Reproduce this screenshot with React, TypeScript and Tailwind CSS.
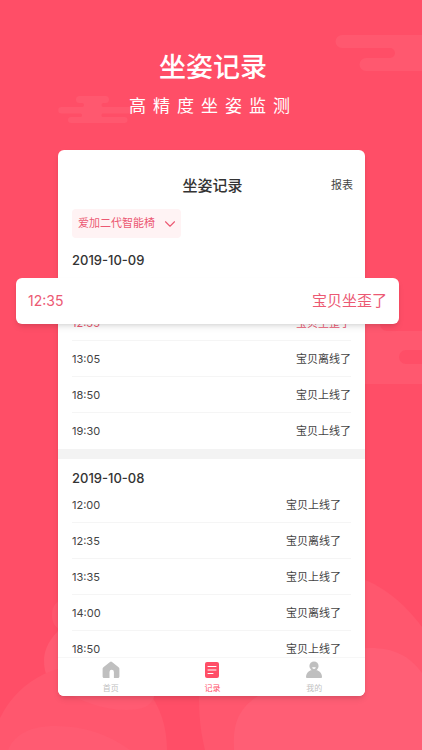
import { ChevronDown } from 'lucide-react';

const days = [
  {
    date: '2019-10-09',
    listClass: 'mt-9',
    statusClass: '',
    records: [
      { time: '12:35', status: '宝贝坐歪了', alert: true },
      { time: '13:05', status: '宝贝离线了', alert: false },
      { time: '18:50', status: '宝贝上线了', alert: false },
      { time: '19:30', status: '宝贝上线了', alert: false },
    ],
  },
  {
    date: '2019-10-08',
    listClass: '',
    statusClass: 'pr-2.5',
    records: [
      { time: '12:00', status: '宝贝上线了', alert: false },
      { time: '12:35', status: '宝贝离线了', alert: false },
      { time: '13:35', status: '宝贝上线了', alert: false },
      { time: '14:00', status: '宝贝离线了', alert: false },
      { time: '18:50', status: '宝贝上线了', alert: false },
    ],
  },
];

function HomeIcon() {
  return (
    <svg viewBox="0 0 18 18" className="size-[18px]" fill="currentColor" aria-hidden="true">
      <path d="M8 .9a1.6 1.6 0 0 1 2 0l6.600 5.300c.5.4.8 1 .8 1.600v7.700c0 .9-.6 1.500-1.500 1.500h-4v-6a2.200 2.200 0 0 0-4.400 0v6H2.100C1.200 17 .6 16.400.6 15.500V7.800c0-.6.3-1.200.8-1.600z" />
    </svg>
  );
}

function RecordIcon() {
  return (
    <svg viewBox="0 0 18 18" className="size-[18px]" aria-hidden="true">
      <rect x="2" y="1" width="14" height="16" rx="2" fill="currentColor" />
      <path d="M5 5.500h8M5 9h8M5 12.500h5" stroke="#fff" strokeWidth="1" strokeLinecap="round" />
    </svg>
  );
}

function ProfileIcon() {
  return (
    <svg viewBox="0 0 18 18" className="size-[18px]" aria-hidden="true">
      <circle cx="9" cy="5" r="4.600" fill="currentColor" />
      <path d="M1 15.800C1.300 12 4.200 8.800 9 8.800s7.700 3.200 8 7c0 .8-.4 1.200-1.200 1.200H2.200c-.8 0-1.200-.4-1.200-1.200z" fill="currentColor" />
      <path d="M7.200 6.200h3.600a1.800 1.800 0 0 1-3.600 0z" fill="#fff" />
    </svg>
  );
}

const tabs = [
  { label: '首页', icon: HomeIcon, active: false },
  { label: '记录', icon: RecordIcon, active: true },
  { label: '我的', icon: ProfileIcon, active: false },
];

function Backdrop() {
  return (
    <svg
      viewBox="0 0 422 750"
      preserveAspectRatio="xMidYMid slice"
      className="absolute inset-0 size-full"
      aria-hidden="true"
    >
      {/* clouds */}
      <g fill="#ff586f">
        <path d="M79.500 96h26a3.500 3.500 0 0 1 0 7h-2a2 2 0 0 0 0 4h26a3.200 3.200 0 0 1 0 6.500h-27a2 2 0 0 0 0 3.500h22a3 3 0 0 1 0 6H71a3 3 0 0 1 0-6h10a2 2 0 0 0 0-3.500H61.500a3.200 3.200 0 0 1 0-6.500H82a2 2 0 0 0 0-4h-2.500a3.500 3.500 0 0 1 0-7z" />
        <path d="M422 35h-80a6.500 6.500 0 0 0 0 13h48a5 5 0 0 1 0 10h-24a6.500 6.500 0 0 0 0 13h56z" />
        <path d="M360 310h20v14a7 7 0 0 0 7 7h35v19h-16a7 7 0 0 0 0 14h16v20h-62z" />
      </g>
      {/* hills */}
      <path d="M199 700C200 630 260 572 325 572c42 0 74 24 97 55v123H205c-4-16-6-32-6-50z" fill="#ff576e" />
      <path d="M234 750c-1-25 3-40 24-54 30-22 62-48 112-48 24 0 40 8 52 25v77z" fill="#ff5e75" />
      <path d="M60 600c-6 4-8 8-8 15s2 11 8 15z" fill="#ff576e" />
      <path d="M62 627c-12 11-18 22-18 33 0 14 4 22 16 30 22 13 46 20 66 20 17 0 26-4 28-14V640z" fill="#ff5b72" />
      <path d="M0 718c10-20 24-34 44-44 35-16 80-12 103 16 14 17 20 38 20 60H0z" fill="#ff576e" />
      <path d="M58 688c22 14 47 22 68 22 17 0 26-4 28-14v-10H58z" fill="#ff5b72" />
      <path d="M8 750c7-17 24-24 48-24 28 0 52 8 74 24z" fill="#ff5b72" />
    </svg>
  );
}

function DeviceSelect() {
  return (
    <div className="relative mt-2 ml-3.5 w-[109px] text-[#ec5973]">
      <select
        aria-label="设备"
        className="block h-[29px] w-full appearance-none rounded-sm bg-[#fff3f4] pl-1.5 text-[11px]"
      >
        <option>爱加二代智能椅</option>
      </select>
      <ChevronDown className="pointer-events-none absolute top-1.5 right-0.5 size-[18px]" strokeWidth={1.5} />
    </div>
  );
}

export default function App() {
  return (
    <main className="relative min-h-screen overflow-hidden bg-[#ff4e67] pb-[54px] font-['Inter','Noto_Sans_CJK_SC',sans-serif] text-[#444]">
      <Backdrop />

      <header className="relative pt-[50px] pl-1 text-center text-white">
        <h1 className="text-[27px] leading-9 font-medium">坐姿记录</h1>
        <p className="mt-2 text-[17px] leading-6 tracking-[7px]">高精度坐姿监测</p>
      </header>

      <div className="relative mt-8 mr-[57px] ml-[58px] rounded-md bg-white shadow-md">
        <div className="grid grid-cols-3 items-center px-3 pt-5 leading-[31px]">
          <h2 className="col-start-2 pl-0.5 text-center text-[15px] font-medium text-[#333]">坐姿记录</h2>
          <button className="justify-self-end text-[11px]">报表</button>
        </div>

        <DeviceSelect />

        <div className="mt-[3px]">
          {days.map((day) => (
            <section key={day.date} className="border-t-10 border-[#f3f3f3] first:border-t-0">
              <h3 className="px-3.5 pt-2.5 text-[13px] leading-[18px] font-medium text-[#333]">{day.date}</h3>
              <ul className={`mx-3.5 ${day.listClass}`}>
                {day.records.map((record) => (
                  <li
                    key={record.time}
                    className={`flex h-9 items-center justify-between border-b border-[#f5f5f5] pt-px text-[11px] last:border-b-0 ${record.alert ? 'text-[#ec5973]' : ''}`}
                  >
                    <time>{record.time}</time>
                    <span className={day.statusClass}>{record.status}</span>
                  </li>
                ))}
              </ul>
            </section>
          ))}
        </div>

        <nav className="relative -mt-2.5 grid h-[39px] grid-cols-3 rounded-b-md border-t border-[#f7f7f7] bg-white pl-0.5">
          {tabs.map(({ label, icon: Icon, active }) => (
            <a
              key={label}
              href="#"
              className={`flex flex-col items-center gap-1 pt-[3px] text-[8px] leading-[10px] ${active ? 'text-[#ff4e67]' : 'text-[#bfbfbf]'}`}
            >
              <Icon />
              {label}
            </a>
          ))}
        </nav>

        {/* enlarged record that floats over the list */}
        <div className="absolute top-32 -right-[34px] -left-[42px] flex h-[46px] items-center justify-between rounded-md bg-white px-3 text-[15px] text-[#ec5973] shadow-md">
          <time className="text-sm">12:35</time>
          <span>宝贝坐歪了</span>
        </div>
      </div>
    </main>
  );
}
